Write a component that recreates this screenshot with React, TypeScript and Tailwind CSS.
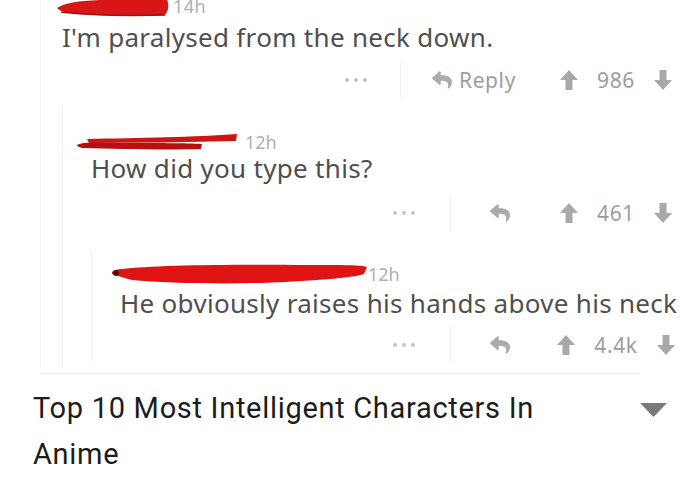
import React from "react";
import { FaReply } from "react-icons/fa";

const Arrow = ({ down }: { down?: boolean }) => (
  <svg width="18" height="20" viewBox="0 0 18 20" className={down ? "rotate-180" : ""}>
    <path d="M9 0 L18 10 L12.5 10 L12.5 20 L5.5 20 L5.5 10 L0 10 Z" fill="#a9a9a9" />
  </svg>
);

const Dots = () => (
  <div className="flex gap-[5px]">
    <span className="w-[4px] h-[4px] rounded-full bg-[#c6c6c6]" />
    <span className="w-[4px] h-[4px] rounded-full bg-[#c6c6c6]" />
    <span className="w-[4px] h-[4px] rounded-full bg-[#c6c6c6]" />
  </div>
);

function ActionRow({ reply, count, className }: { reply?: boolean; count: string; className: string }) {
  return (
    <div className={`h-[36px] flex items-center justify-end ${className}`}>
      <div className="w-[360px] shrink-0 h-full flex items-center">
        <div className={reply ? "ml-[5px]" : "ml-[53px]"}>
          <Dots />
        </div>
        <div className={reply ? "ml-[33px] w-px h-[36px] bg-[#f0f0f0]" : "ml-[35px] w-px h-[36px] bg-[#f0f0f0]"} />
        <div className={reply ? "ml-[29px] flex items-center" : "ml-[37px] flex items-center"}>
          <FaReply className="text-[#ababab] w-[24px] h-[20px]" />
          {reply && <span className="ml-[5px] text-[21px] tracking-[0.6px] leading-none text-[#9d9d9d]">Reply</span>}
        </div>
        <div className="ml-auto mr-[19px] w-[130px] flex items-center justify-center gap-[19px]">
          <Arrow />
          <span className="text-[21px] tracking-[0.6px] leading-none text-[#9d9d9d]">{count}</span>
          <Arrow down />
        </div>
      </div>
    </div>
  );
}

export default function App() {
  return (
    <div className="w-[700px] h-[479px] bg-white overflow-hidden font-['Noto_Sans',sans-serif]">
      {/* comment 1 */}
      <div className="ml-[40px] border-l border-[#f4f4f4] h-[370px] pl-[21px]">
        <div className="h-[22px] flex items-start">
          <svg width="112" height="17" viewBox="0 0 112 17" className="-ml-[5px] shrink-0">
            <path d="M0 8 C 8 2, 30 0, 50 0 L 110 0 C 112 4, 112 10, 108 15 C 80 17, 50 16, 20 14 C 10 13, 2 11, 0 8 Z" fill="#d81616" />
            <path d="M4 12 C 30 15, 70 16, 108 15" stroke="#a80e0e" strokeWidth="1.5" fill="none" />
          </svg>
          <span className="ml-[4px] -mt-[3px] text-[18px] tracking-[0.5px] leading-[18px] text-[#b0b0b0]">14h</span>
        </div>
        <div className="h-[30px] text-[26px] tracking-[0.3px] leading-[30px] text-[#4f4f4f] whitespace-nowrap">I'm paralysed from the neck down.</div>
        <ActionRow reply count="986" className="mt-[10px]" />

        {/* comment 2 */}
        <div className="mt-[7px] border-l border-[#f0f0f0] pl-[28px] pt-[25px] pb-[7px]">
          <div className="h-[23px] flex items-center">
            <svg width="160" height="17" viewBox="0 0 160 17" className="-ml-[14px] shrink-0">
              <path d="M10 6 C 60 5, 120 4, 160 1 L 159 8 C 110 9, 60 10, 12 10 Z" fill="#cc1515" />
              <path d="M0 12 C 3 9, 20 9, 40 10 C 80 10, 110 10, 125 11 L 124 16 C 90 17, 40 16, 5 15 C 1 14, 0 13, 0 12 Z" fill="#b51111" />
            </svg>
            <span className="ml-[8px] text-[18px] leading-none text-[#b0b0b0]">12h</span>
          </div>
          <div className="h-[30px] text-[26px] tracking-[0.3px] leading-[30px] text-[#4f4f4f] whitespace-nowrap">How did you type this?</div>
          <ActionRow count="461" className="mt-[12px]" />

          {/* comment 3 */}
          <div className="mt-[19px] border-l border-[#f0f0f0] pl-[28px] pt-[12px]">
            <div className="h-[23px] flex items-center">
              <svg width="255" height="23" viewBox="0 0 255 23" className="-ml-[8px] shrink-0">
                <path d="M0 10 C 2 8, 6 7, 10 7 C 40 3, 120 2, 200 3 C 230 3, 250 3, 255 5 L 252 12 C 240 16, 200 19, 150 21 C 100 22, 50 21, 20 18 C 12 16, 6 14, 0 12 Z" fill="#e01414" />
                <circle cx="4" cy="11" r="3" fill="#5c0b0b" />
              </svg>
              <span className="ml-[1px] text-[18px] leading-none text-[#b0b0b0]">12h</span>
            </div>
            <div className="mt-[3px] h-[30px] text-[26px] tracking-[0.3px] leading-[30px] text-[#4f4f4f] whitespace-nowrap">He obviously raises his hands above his neck</div>
            <ActionRow count="4.4k" className="mt-[9px]" />
          </div>
        </div>
      </div>

      <div className="mt-[3px] ml-[40px] w-[600px] h-px bg-[#ececec]" />

      <div className="mt-[11px] pl-[33px] flex items-start">
        <div className="w-[540px] shrink-0 text-[29px] tracking-[0.7px] leading-[46px] text-[#1c1c1c] font-['Roboto',sans-serif]">
          Top 10 Most Intelligent Characters In Anime
        </div>
        <svg width="27" height="14" viewBox="0 0 27 14" className="ml-[67px] mt-[18px] shrink-0">
          <path d="M0 0 L27 0 L13.5 14 Z" fill="#7a7a7a" />
        </svg>
      </div>
    </div>
  );
}
